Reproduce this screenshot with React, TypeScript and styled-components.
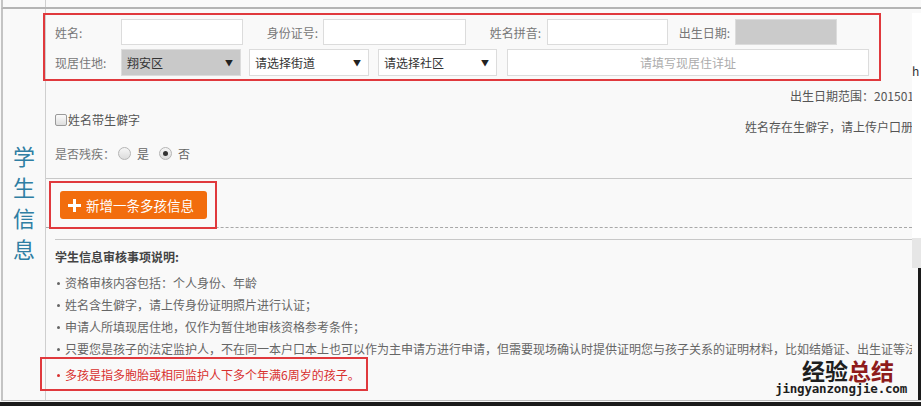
import React from 'react';
import styled, { createGlobalStyle } from 'styled-components';

const FONT = '"Noto Sans CJK SC", "Microsoft YaHei", sans-serif';
const MARK_RED = '#e0393d';
const LINE_GRAY = '#c8c8c8';

const GlobalStyle = createGlobalStyle`
  html, body {
    margin: 0;
    padding: 0;
    background: #f9f9f9;
  }
  body {
    font-family: ${FONT};
    font-size: 12px;
    color: #666;
  }
`;

const Frame = styled.div`
  position: relative;
  width: 921px;
  height: 406px;
  overflow: hidden;
  background: #f9f9f9;
`;

const TopStrip = styled.div`
  display: flex;
  height: 7px;
  margin-left: 1px;
  border-left: 2px solid #c4c4c4;
  border-bottom: 2px solid #b4b4b4;
`;

const TopCell = styled.div`
  width: 43px;
  box-sizing: border-box;
  border-right: 1px solid #cfcfcf;
`;

const Body = styled.div`
  display: grid;
  grid-template-columns: 43px 866px 9px;
  height: 391px;
  margin-left: 1px;
  border-left: 2px solid #c4c4c4;
  border-bottom: 1px solid #bdbdbd;
`;

const BottomEdge = styled.div`
  height: 4px;
  margin-top: 1px;
  background: #1b1b1b;
`;

const SideTitle = styled.div`
  box-sizing: border-box;
  border-right: 1px solid #cfcfcf;
  display: flex;
  flex-direction: column;
  align-items: center;
  justify-content: center;
  padding-bottom: 6px;
  color: #2f7ea3;
  font-size: 22px;
  line-height: 31px;
`;

const Main = styled.div`
  min-width: 0;
  display: flex;
  flex-direction: column;
`;

const RightStrip = styled.div`
  display: flex;
  flex-direction: column;
`;

const StripTop = styled.div`
  margin-top: 4px;
  height: 225px;
  background: #fff;
  padding-top: 51px;
  box-sizing: border-box;
  color: #333;
  font-size: 12px;
  line-height: 14px;
`;

const StripThumb = styled.div`
  height: 30px;
  background: #e6e6e6;
`;

const StripRest = styled.div`
  flex: 1;
  border-right: 3px solid #1b1b1b;
`;

/* ---------- form box ---------- */

const FormBox = styled.div`
  margin: 4px 0 0 -3px;
  width: 838px;
  box-sizing: border-box;
  border: 2px solid ${MARK_RED};
  padding: 4px 0 3px 10px;
  display: flex;
  flex-direction: column;
  gap: 4px;
`;

const FormRow = styled.div<{ $h: number }>`
  display: flex;
  align-items: center;
  height: ${(p) => p.$h}px;
`;

const Label = styled.span<{ $w: number; $right?: boolean; $pr?: number }>`
  flex: none;
  width: ${(p) => p.$w}px;
  box-sizing: border-box;
  text-align: ${(p) => (p.$right ? 'right' : 'left')};
  padding-right: ${(p) => p.$pr ?? 0}px;
  color: #777;
  font-size: 12px;
  white-space: nowrap;
`;

const TextInput = styled.input<{ $w: number; $center?: boolean; $ml?: number }>`
  flex: none;
  width: ${(p) => p.$w}px;
  height: 100%;
  box-sizing: border-box;
  margin: 0 0 0 ${(p) => p.$ml ?? 0}px;
  border: 1px solid #dcdcdc;
  background: #fff;
  outline: none;
  font-family: ${FONT};
  font-size: 12px;
  color: #333;
  text-align: ${(p) => (p.$center ? 'center' : 'left')};
  &::placeholder {
    color: #acacac;
  }
`;

const DisabledBox = styled.div<{ $w: number }>`
  flex: none;
  width: ${(p) => p.$w}px;
  height: 100%;
  box-sizing: border-box;
  border: 1px solid #dcdcdc;
  background: #cbcbcb;
`;

const SelectBox = styled.div<{ $w: number; $gray?: boolean; $ml?: number }>`
  flex: none;
  width: ${(p) => p.$w}px;
  height: 100%;
  margin-left: ${(p) => p.$ml ?? 0}px;
  box-sizing: border-box;
  display: flex;
  align-items: center;
  justify-content: space-between;
  padding: 0 7px 0 5px;
  border: 1px solid #dcdcdc;
  background: ${(p) => (p.$gray ? '#c9c9c9' : '#fff')};
  color: #333;
  font-size: 12px;
`;

const Caret = styled.span`
  font-size: 8px;
  color: #222;
`;

/* ---------- info rows ---------- */

const ClipRow = styled.div<{ $mt: number }>`
  margin-top: ${(p) => p.$mt}px;
  white-space: nowrap;
  overflow: hidden;
  line-height: 16px;
  color: #555;
`;

const RangeText = styled.span`
  display: inline-block;
  margin-left: 744px;
`;

const RareRow = styled.div`
  display: flex;
  justify-content: space-between;
  align-items: flex-start;
  height: 28px;
  margin-top: 8px;
  padding-left: 9px;
  line-height: 16px;
  color: #555;
  white-space: nowrap;
  overflow: hidden;
`;

const CheckLabel = styled.span`
  display: flex;
  align-items: center;
`;

const CheckBox = styled.span`
  width: 10px;
  height: 10px;
  border: 1px solid #9a9a9a;
  border-radius: 2px;
  background: linear-gradient(#fbfbfb, #dedede);
  margin-right: 1px;
`;

const RareNote = styled.span`
  margin-top: 7px;
  margin-right: -1px;
`;

const RadioRow = styled.div`
  display: flex;
  align-items: center;
  height: 16px;
  margin-top: 5px;
  padding-left: 9px;
  color: #777;
`;

const Radio = styled.span<{ $on?: boolean; $ml: number }>`
  position: relative;
  width: 11px;
  height: 11px;
  border: 1px solid #b5b5b5;
  border-radius: 50%;
  background: linear-gradient(#f6f6f6, #dcdcdc);
  margin: 0 6px 0 ${(p) => p.$ml}px;
  &::after {
    content: '';
    display: ${(p) => (p.$on ? 'block' : 'none')};
    position: absolute;
    left: 3px;
    top: 3px;
    width: 5px;
    height: 5px;
    border-radius: 50%;
    background: #333;
  }
`;

const RadioText = styled.span`
  color: #666;
`;

const SolidLine = styled.div<{ $mt: number; $ml?: number }>`
  height: 1px;
  margin-top: ${(p) => p.$mt}px;
  margin-left: ${(p) => p.$ml ?? 0}px;
  background: ${LINE_GRAY};
`;

const DashedLine = styled.div`
  height: 0;
  border-top: 1px dashed #a8a8a8;
`;

const ButtonBox = styled.div`
  width: 168px;
  margin: 2px 0 -2px 3px;
  box-sizing: border-box;
  border: 2px solid ${MARK_RED};
  padding: 8px 8px 8px 9px;
  position: relative;
  z-index: 1;
`;

const AddButton = styled.button`
  display: flex;
  align-items: center;
  gap: 5px;
  width: 147px;
  height: 28px;
  padding: 0 0 0 8px;
  border: none;
  border-radius: 3px;
  background: #f26d0d;
  color: #fff;
  font-family: ${FONT};
  font-size: 13.5px;
  cursor: pointer;
`;

const NoticeTitle = styled.div`
  margin-top: 10px;
  padding-left: 9px;
  line-height: 14px;
  font-weight: bold;
  color: #444;
`;

const NoticeList = styled.ul`
  list-style: none;
  margin: 8px 0 0;
  padding: 0;
`;

const Dot = styled.span`
  display: inline-block;
  width: 3px;
  height: 3px;
  border-radius: 50%;
  background: currentColor;
  margin: 0 5px 3px 0;
  vertical-align: middle;
`;

const NoticeItem = styled.li`
  padding-left: 11px;
  line-height: 22px;
  white-space: nowrap;
  overflow: hidden;
  color: #666;
`;

const HighlightBox = styled.div`
  width: 328px;
  margin: -3px 0 0 -6px;
  box-sizing: border-box;
  border: 2px solid ${MARK_RED};
  padding: 5px 0 3px 15px;
  line-height: 22px;
  color: #d8302f;
  white-space: nowrap;
`;

/* ---------- watermark ---------- */

const Watermark = styled.div`
  position: absolute;
  right: 14px;
  bottom: 10px;
  display: flex;
  flex-direction: column;
  align-items: center;
`;

const MarkWords = styled.div`
  font-size: 23px;
  font-weight: bold;
  line-height: 24px;
  color: #1e1e1e;
  margin-left: 14px;
`;

const MarkRed = styled.span`
  color: #8e1b1b;
`;

const MarkUrl = styled.div`
  font-family: "DejaVu Sans Mono", "Liberation Mono", monospace;
  font-weight: bold;
  font-size: 12.5px;
  line-height: 14px;
  color: #1e1e1e;
  letter-spacing: -0.2px;
`;

const PlusIcon = () => (
  <svg width="13" height="13" viewBox="0 0 13 13">
    <rect x="5" y="0" width="3" height="13" fill="#fff" />
    <rect x="0" y="5" width="13" height="3" fill="#fff" />
  </svg>
);

const notices = [
  '资格审核内容包括：个人身份、年龄',
  '姓名含生僻字，请上传身份证明照片进行认证；',
  '申请人所填现居住地，仅作为暂住地审核资格参考条件；',
  '只要您是孩子的法定监护人，不在同一本户口本上也可以作为主申请方进行申请，但需要现场确认时提供证明您与孩子关系的证明材料，比如结婚证、出生证等法律文书。',
];

export default function App() {
  return (
    <Frame>
      <GlobalStyle />
      <TopStrip>
        <TopCell />
      </TopStrip>
      <Body>
        <SideTitle>
          <span>学</span>
          <span>生</span>
          <span>信</span>
          <span>息</span>
        </SideTitle>

        <Main>
          <FormBox>
            <FormRow $h={26}>
              <Label $w={66}>姓名:</Label>
              <TextInput $w={122} />
              <Label $w={80} $right $pr={5}>身份证号:</Label>
              <TextInput $w={143} />
              <Label $w={81} $right $pr={6}>姓名拼音:</Label>
              <TextInput $w={121} />
              <Label $w={67} $right $pr={5}>出生日期:</Label>
              <DisabledBox $w={102} />
            </FormRow>
            <FormRow $h={27}>
              <Label $w={66}>现居住地:</Label>
              <SelectBox $w={120} $gray>
                翔安区<Caret>▼</Caret>
              </SelectBox>
              <SelectBox $w={120} $ml={8}>
                请选择街道<Caret>▼</Caret>
              </SelectBox>
              <SelectBox $w={119} $ml={9}>
                请选择社区<Caret>▼</Caret>
              </SelectBox>
              <TextInput $w={362} $ml={10} $center placeholder="请填写现居住详址" />
            </FormRow>
          </FormBox>

          <ClipRow $mt={7}>
            <RangeText>出生日期范围：20150101-20171231</RangeText>
          </ClipRow>

          <RareRow>
            <CheckLabel>
              <CheckBox />
              姓名带生僻字
            </CheckLabel>
            <RareNote>姓名存在生僻字，请上传户口册</RareNote>
          </RareRow>

          <RadioRow>
            是否残疾：
            <Radio $ml={3} />
            <RadioText>是</RadioText>
            <Radio $ml={10} $on />
            <RadioText>否</RadioText>
          </RadioRow>

          <SolidLine $mt={17} />

          <ButtonBox>
            <AddButton type="button">
              <PlusIcon />
              新增一条多孩信息
            </AddButton>
          </ButtonBox>
          <DashedLine />

          <SolidLine $mt={11} $ml={9} />

          <NoticeTitle>学生信息审核事项说明:</NoticeTitle>
          <NoticeList>
            {notices.map((n) => (
              <NoticeItem key={n}>
                <Dot />
                {n}
              </NoticeItem>
            ))}
          </NoticeList>
          <HighlightBox>
            <Dot />
            多孩是指多胞胎或相同监护人下多个年满6周岁的孩子。
          </HighlightBox>
        </Main>

        <RightStrip>
          <StripTop>h</StripTop>
          <StripThumb />
          <StripRest />
        </RightStrip>
      </Body>
      <BottomEdge />

      <Watermark>
        <MarkWords>
          经验<MarkRed>总结</MarkRed>
        </MarkWords>
        <MarkUrl>jingyanzongjie.com</MarkUrl>
      </Watermark>
    </Frame>
  );
}
